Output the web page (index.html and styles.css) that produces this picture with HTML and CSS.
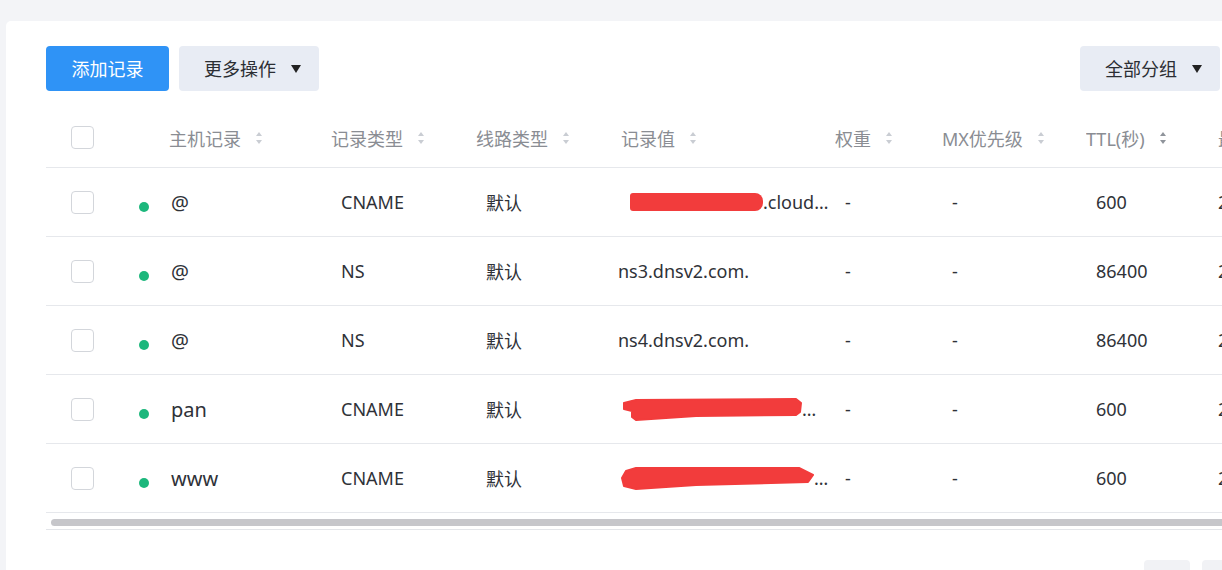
FILE: index.html
```html
<!DOCTYPE html>
<html lang="zh-CN">
<head>
	<meta charset="UTF-8">
	<title>记录管理</title>
	<link rel="stylesheet" href="styles.css">
</head>
<body>
	<div class="card">
		<div class="toolbar">
			<div class="tools-left">
				<button class="btn btn-primary">添加记录</button>
				<button class="btn btn-gray">更多操作<i class="caret"></i></button>
			</div>
			<button class="btn btn-gray">全部分组<i class="caret"></i></button>
		</div>

		<div class="table">
			<div class="row head">
				<div class="cell"><span class="check"></span></div>
				<div class="cell host">主机记录<i class="sort"></i></div>
				<div class="cell">记录类型<i class="sort"></i></div>
				<div class="cell">线路类型<i class="sort"></i></div>
				<div class="cell val">记录值<i class="sort"></i></div>
				<div class="cell">权重<i class="sort"></i></div>
				<div class="cell">MX优先级<i class="sort"></i></div>
				<div class="cell">TTL(秒)<i class="sort dark"></i></div>
				<div class="cell last">最后操作时间</div>
			</div>

			<div class="row">
				<div class="cell"><span class="check"></span></div>
				<div class="cell host"><span class="dot"></span>@</div>
				<div class="cell">CNAME</div>
				<div class="cell">默认</div>
				<div class="cell val"><span class="redact"></span>.cloud…</div>
				<div class="cell">-</div>
				<div class="cell">-</div>
				<div class="cell">600</div>
				<div class="cell last">2021-03-15 10:21:08</div>
			</div>

			<div class="row">
				<div class="cell"><span class="check"></span></div>
				<div class="cell host"><span class="dot"></span>@</div>
				<div class="cell">NS</div>
				<div class="cell">默认</div>
				<div class="cell val">ns3.dnsv2.com.</div>
				<div class="cell">-</div>
				<div class="cell">-</div>
				<div class="cell">86400</div>
				<div class="cell last">2021-03-15 10:02:47</div>
			</div>

			<div class="row">
				<div class="cell"><span class="check"></span></div>
				<div class="cell host"><span class="dot"></span>@</div>
				<div class="cell">NS</div>
				<div class="cell">默认</div>
				<div class="cell val">ns4.dnsv2.com.</div>
				<div class="cell">-</div>
				<div class="cell">-</div>
				<div class="cell">86400</div>
				<div class="cell last">2021-03-15 10:02:47</div>
			</div>

			<div class="row">
				<div class="cell"><span class="check"></span></div>
				<div class="cell host"><span class="dot"></span>pan</div>
				<div class="cell">CNAME</div>
				<div class="cell">默认</div>
				<div class="cell val">
					<svg class="scribble" width="184" height="24" viewBox="0 0 184 24"><path d="M4 6 L16 3 L176 2 L181 6 L180 15 L176 18 L76 19 L16 23 L12 20 L12 14 L4 12 Z"/></svg><span class="tail">…</span>
				</div>
				<div class="cell">-</div>
				<div class="cell">-</div>
				<div class="cell">600</div>
				<div class="cell last">2021-03-15 10:12:30</div>
			</div>

			<div class="row">
				<div class="cell"><span class="check"></span></div>
				<div class="cell host"><span class="dot"></span>www</div>
				<div class="cell">CNAME</div>
				<div class="cell">默认</div>
				<div class="cell val">
					<svg class="scribble" width="196" height="25" viewBox="0 0 196 25"><path d="M6 5 L16 2 L179 2 L193 9 L188 16 L76 19 L16 23 L4 20 L2 12 Z"/></svg><span class="tail">…</span>
				</div>
				<div class="cell">-</div>
				<div class="cell">-</div>
				<div class="cell">600</div>
				<div class="cell last">2021-03-15 10:12:30</div>
			</div>

			<div class="scroll"><div class="thumb"></div></div>
		</div>

		<div class="pager">
			<span class="page"></span>
			<span class="page"></span>
		</div>
	</div>
</body>
</html>
```

FILE: styles.css
```css
body{margin: 0; background: #f3f4f7; overflow: hidden; font-family: "Noto Sans", "Noto Sans CJK SC", sans-serif; color: #2f3238;}
.card{margin: 21px 0 0 6px; width: 1174px; padding: 25px 26px 0 40px; background: #fff; border-radius: 5px 0 0 0; height: 600px;}

/* toolbar */
.toolbar{display: flex; justify-content: space-between; align-items: center;}
.tools-left{display: flex; gap: 10px;}
.btn{height: 45px; border: none; border-radius: 4px; font-family: inherit; font-size: 18px; display: flex; align-items: center; padding: 0; line-height: 1;}
.btn-primary{background: #2f93f6; color: #fff; width: 123px; justify-content: center;}
.btn-gray{background: #e8ecf4; color: #2b2e33; width: 140px; padding-left: 25px; gap: 15px;}
.caret{display: block; width: 0; height: 0; border-left: 5px solid transparent; border-right: 5px solid transparent; border-top: 8px solid #222;}

/* table */
.table{margin-top: 19px; width: 1300px;}
.row{display: grid; box-sizing: border-box; grid-template-columns: 85px 200px 145px 142px 217px 107px 144px 132px 128px; height: 69px; border-bottom: 1px solid #e6e8ec; font-size: 18px; align-items: center;}
.row.head{height: 58px; color: #8a8d93; font-size: 18px; padding-bottom: 2px;}
.cell{display: flex; align-items: center; white-space: nowrap; overflow: hidden; padding-left: 10px;}
.row .cell:first-child{padding-left: 25px;}
.row .cell.host{padding-left: 8px; font-size: 20px;}
.row .cell.val{padding-left: 0;}
.row .cell.last{padding-left: 0;}
.head .cell{padding-left: 0;}
.head .cell.host{padding-left: 38px; font-size: 18px;}
.head .cell.val{padding-left: 3px;}

.check{display: block; width: 21px; height: 21px; border: 1px solid #d3d6db; border-radius: 4px; background: #fff;}
.dot{display: block; width: 10px; height: 10px; border-radius: 50%; background: #1cb77c; margin: 10px 22px 0 0;}

.sort{display: block; margin-left: 15px; width: 7px; height: 12px; position: relative;}
.sort:before, .sort:after{content: ''; position: absolute; left: 0; border-left: 3.5px solid transparent; border-right: 3.5px solid transparent;}
.sort:before{top: 0; border-bottom: 4px solid #c9cdd3;}
.sort:after{bottom: 0; border-top: 4px solid #c9cdd3;}
.sort.dark:before{border-bottom-color: #8f949b;}
.sort.dark:after{border-top-color: #8f949b;}

.redact{display: inline-block; width: 133px; height: 18px; background: #f23c3c; border-radius: 3px 8px 8px 3px; margin-left: 12px; flex: none;}
.scribble{flex: none; margin-left: 2px;}
.scribble path{fill: #f23c3c; stroke: #f23c3c; stroke-width: 2; stroke-linejoin: round;}
.tail{margin-left: -2px;}

.scroll{height: 17px; border-bottom: 1px solid #e3e5e9; padding: 6px 0 0 5px; box-sizing: border-box;}
.thumb{height: 7px; background: #c6c6ca; border-radius: 4px;}

.pager{display: flex; justify-content: flex-end; gap: 12px; margin-top: 30px; margin-right: -28px;}
.page{display: block; width: 46px; height: 30px; background: #f1f2f5; border-radius: 4px;}
```
